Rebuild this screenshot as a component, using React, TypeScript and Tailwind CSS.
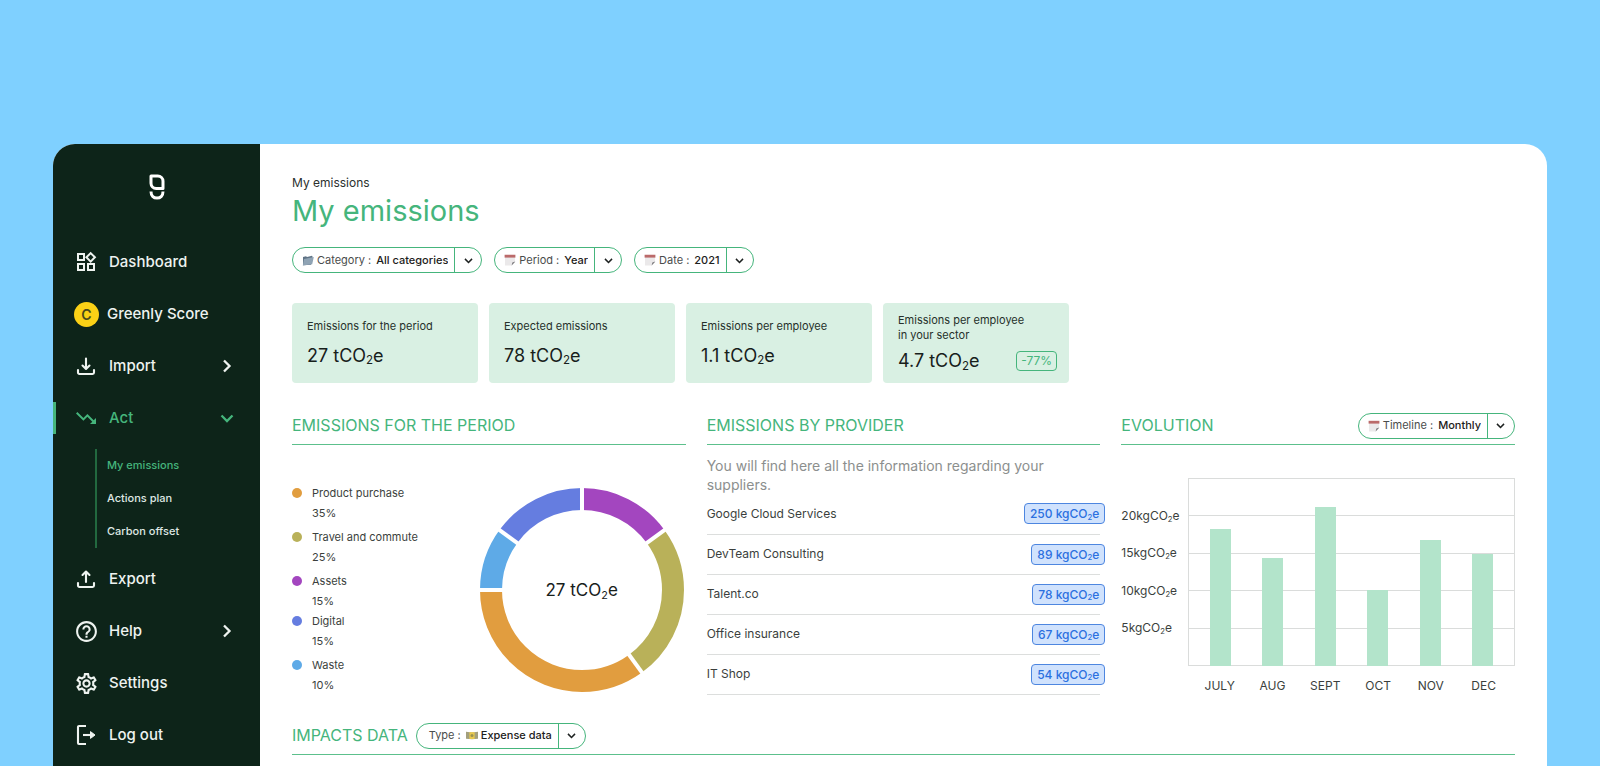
import type { ReactNode } from 'react';
import { MdHelpOutline, MdOutlineSettings, MdOutlineWidgets, MdTrendingDown } from 'react-icons/md';

interface Slice { name: string; pct: number; color: string }
interface Provider { name: string; kg: number }

const LEGEND: Slice[] = [
  { name: 'Product purchase', pct: 35, color: '#e19d3f' },
  { name: 'Travel and commute', pct: 25, color: '#b9b159' },
  { name: 'Assets', pct: 15, color: '#a346bf' },
  { name: 'Digital', pct: 15, color: '#657de0' },
  { name: 'Waste', pct: 10, color: '#5eaae7' },
];

// clockwise from 12 o'clock
const RING = [LEGEND[2], LEGEND[1], LEGEND[0], LEGEND[4], LEGEND[3]];

const PROVIDERS: Provider[] = [
  { name: 'Google Cloud Services', kg: 250 },
  { name: 'DevTeam Consulting', kg: 89 },
  { name: 'Talent.co', kg: 78 },
  { name: 'Office insurance', kg: 67 },
  { name: 'IT Shop', kg: 54 },
];

const MONTHS = [
  { name: 'JULY', value: 18.3 },
  { name: 'AUG', value: 14.4 },
  { name: 'SEPT', value: 21.2 },
  { name: 'OCT', value: 10.2 },
  { name: 'NOV', value: 16.9 },
  { name: 'DEC', value: 15 },
];
const CHART_MAX = 25;

function CO2() {
  return <>CO<sub className="text-[64%]">2</sub>e</>;
}

function Logo() {
  return (
    <svg width="16" height="26" viewBox="0 0 16 26" fill="none" stroke="#fff" strokeWidth="3" aria-label="Greenly">
      <path d="M2 2h6.8A5.2 5.2 0 0 1 14 7.2v7.3H7.2A5.2 5.2 0 0 1 2 9.3z" strokeLinejoin="round" />
      <path d="M2 17.6c0 4 2.5 6.5 6 6.5s6-2.5 6-6.5" />
    </svg>
  );
}

function TrayIcon({ up }: { up?: boolean }) {
  return (
    <svg width="22" height="22" viewBox="0 0 22 22" fill="none" stroke="currentColor" strokeWidth="2.1" strokeLinecap="round" strokeLinejoin="round">
      <path d="M3 15v2.600A1.400 1.400 0 0 0 4.400 19h13.200a1.400 1.400 0 0 0 1.400-1.400V15" />
      <path d={up ? 'M11 14V4M7.5 7L11 3.5 14.5 7' : 'M11 3.5v10M7.5 10.500L11 14l3.500-3.500'} />
    </svg>
  );
}

function LogoutIcon() {
  return (
    <svg width="22" height="22" viewBox="0 0 22 22" fill="none" stroke="currentColor" strokeWidth="2.1">
      <path d="M11 2H4a1 1 0 0 0-1 1v16a1 1 0 0 0 1 1h7" />
      <path d="M8 11h8" />
      <path d="M15.5 7.6L20 11l-4.5 3.400z" fill="currentColor" strokeWidth="1" strokeLinejoin="round" />
    </svg>
  );
}

function Chevron({ dir, size = 14 }: { dir: 'right' | 'down'; size?: number }) {
  return (
    <svg width={size} height={size} viewBox="0 0 14 14" fill="none" stroke="currentColor" strokeWidth="2.3">
      <path d={dir === 'right' ? 'M4 1.5L9.5 7 4 12.5' : 'M1.5 4.5L7 10l5.5-5.5'} />
    </svg>
  );
}

function FolderIcon() {
  return (
    <svg width="12" height="11" viewBox="0 0 12 11">
      <path d="M1 2l3-.8 1 .8 5-1.2.6 1L9 9.8l-8 .4z" fill="#5f7385" />
      <path d="M2 4l9.8-2-1.6 7.2-9.4 1.2z" fill="#8fa3b4" />
    </svg>
  );
}

function CalendarIcon() {
  return (
    <svg width="12" height="12" viewBox="0 0 12 12">
      <path d="M1 3h10v5l-3 3.4H1z" fill="#ebe9ea" />
      <path d="M.6.8h10.8v2.8H.6z" fill="#bb6a6a" />
      <path d="M7.6 11.4l.8-3 3-.8z" fill="#77767a" />
    </svg>
  );
}

function MoneyIcon() {
  return (
    <svg width="12" height="9" viewBox="0 0 12 9">
      <path d="M0 .8l6 .6 6-.6v7l-6 .4-6-.4z" fill="#a3a07c" />
      <path d="M3.4 1.2h5.2V8H3.4z" fill="#e8c84e" />
      <circle cx="6" cy="4.5" r="1.5" fill="#9a9350" />
    </svg>
  );
}

function Filter({ label, value, icon, valueIcon }: { label: string; value: string; icon?: ReactNode; valueIcon?: ReactNode }) {
  return (
    <label className="relative flex h-[26px] items-center rounded-full border border-[#45b57c] bg-white pl-[9px] text-[11px] text-[#4a4d4c]">
      {icon}
      <span className="ml-[3px] mr-[5px]">{label} :</span>
      {valueIcon && <span className="mr-[3px]">{valueIcon}</span>}
      <select className="h-full appearance-none pr-[33px] font-medium text-[#1d2120] outline-none [field-sizing:content]">
        <option>{value}</option>
      </select>
      <span className="pointer-events-none absolute inset-y-0 right-0 flex w-[27px] items-center justify-center border-l border-[#45b57c] text-[#1d2120]">
        <Chevron dir="down" size={9} />
      </span>
    </label>
  );
}

function NavItem({ icon, label, chevron, active }: { icon: ReactNode; label: string; chevron?: 'right' | 'down'; active?: boolean }) {
  return (
    <a
      href="#"
      className={`relative flex h-[52px] items-center pl-[22px] pr-[26px] text-[15px] font-medium ${active ? 'text-[#45b57c]' : 'text-[#eef3f0]'}`}
    >
      {active && <span className="absolute left-0 h-8 w-[3px] bg-[#45b57c]" />}
      <span className="flex w-[22px] justify-center">{icon}</span>
      <span className="ml-3 flex-1">{label}</span>
      {chevron && <Chevron dir={chevron} />}
    </a>
  );
}

function Sidebar() {
  return (
    <nav className="w-[207px] shrink-0 bg-[#0d2419]">
      <div className="flex h-[92px] justify-center pt-[30px]"><Logo /></div>
      <NavItem icon={<MdOutlineWidgets size={24} className="shrink-0" />} label="Dashboard" />
      <a href="#" className="flex h-[52px] items-center gap-2 pl-[21px] text-[15px] font-medium text-[#eef3f0]">
        <span className="flex size-[25px] items-center justify-center rounded-full bg-[#fbd116] text-[14px] font-semibold text-[#4a4a1c]">C</span>
        Greenly Score
      </a>
      <NavItem icon={<TrayIcon />} label="Import" chevron="right" />
      <NavItem icon={<MdTrendingDown size={24} className="shrink-0" />} label="Act" chevron="down" active />
      <ul className="my-[5px] ml-[42px] border-l-2 border-[#22693f] pl-2.5 text-[11px] font-medium text-[#dfe7e3]">
        <li className="flex h-[33px] items-center text-[#45b57c]"><a href="#">My emissions</a></li>
        <li className="flex h-[33px] items-center"><a href="#">Actions plan</a></li>
        <li className="flex h-[33px] items-center"><a href="#">Carbon offset</a></li>
      </ul>
      <NavItem icon={<TrayIcon up />} label="Export" />
      <NavItem icon={<MdHelpOutline size={25} className="shrink-0" />} label="Help" chevron="right" />
      <NavItem icon={<MdOutlineSettings size={25} className="shrink-0" />} label="Settings" />
      <NavItem icon={<LogoutIcon />} label="Log out" />
    </nav>
  );
}

function StatCard({ label, value, delta }: { label: ReactNode; value: string; delta?: string }) {
  return (
    <div className="flex h-20 w-[186px] flex-col justify-center rounded bg-[#d9f0e3] pl-[15px] pr-3 pt-0.5">
      <div className="text-[11px] leading-[15px] text-[#26302b]">{label}</div>
      <div className={`flex items-center justify-between ${delta ? 'mt-1' : 'mt-2'}`}>
        <span className="text-[18px] leading-7 text-[#17201b]">{value} t<CO2 /></span>
        {delta && (
          <span className="rounded border border-[#45b57c] px-1 text-[12px] leading-[18px] text-[#45b57c]">{delta}</span>
        )}
      </div>
    </div>
  );
}

function SectionHeader({ title, children }: { title: string; children?: ReactNode }) {
  return (
    <div className="flex h-[38px] items-center justify-between border-b border-[#5cc08c]">
      <h2 className="pb-0.5 text-[16px] text-[#45b57c]">{title}</h2>
      {children}
    </div>
  );
}

function Donut() {
  const r = 91;
  const len = 2 * Math.PI * r;
  let start = 0;
  const arcs = RING.map((s) => {
    const arc = { ...s, start };
    start += s.pct;
    return arc;
  });
  return (
    <div className="relative size-[204px]">
      <svg viewBox="-102 -102 204 204" className="size-full -rotate-90">
        {arcs.map((a) => (
          <circle
            key={a.name}
            r={r}
            fill="none"
            stroke={a.color}
            strokeWidth="22"
            strokeDasharray={`${(a.pct / 100) * len} ${len}`}
            strokeDashoffset={-(a.start / 100) * len}
          />
        ))}
        {arcs.map((a) => (
          <line key={a.name} x1="76" x2="104" stroke="#fff" strokeWidth="4" transform={`rotate(${a.start * 3.6})`} />
        ))}
      </svg>
      <div className="absolute inset-0 flex items-center justify-center text-[17px] text-[#17201b]">
        <span>27 t<CO2 /></span>
      </div>
    </div>
  );
}

function PeriodSection() {
  return (
    <section>
      <SectionHeader title="EMISSIONS FOR THE PERIOD" />
      <div className="flex justify-between pr-0.5 pt-[38px] text-[11px] leading-5 text-[#3b3f3d]">
        <ul>
          {LEGEND.map((s) => (
            <li key={s.name} className={s.name === 'Assets' ? 'flex gap-2.5' : 'mb-1 flex gap-2.5'}>
              <span className="mt-[5px] size-2.5 rounded-full" style={{ background: s.color }} />
              <div>
                <div>{s.name}</div>
                <div>{s.pct}%</div>
              </div>
            </li>
          ))}
        </ul>
        <div className="mt-[5px]"><Donut /></div>
      </div>
    </section>
  );
}

function ProviderSection() {
  return (
    <section>
      <SectionHeader title="EMISSIONS BY PROVIDER" />
      <p className="pt-[11px] text-[14px] leading-[19px] text-[#8c8f8e]">
        You will find here all the information regarding your suppliers.
      </p>
      <table className="w-full text-[12px] text-[#3b3f3d]">
        <tbody>
          {PROVIDERS.map((p) => (
            <tr key={p.name} className="h-10 border-b border-[#dcdedd]">
              <td>{p.name}</td>
              <td>
                <div className="-mr-[5px] flex justify-end">
                  <span className="rounded border border-[#4d86e0] bg-[#d0e2fd] px-[5px] font-medium leading-[19px] text-[#2c70e0]">
                    {p.kg} kg<CO2 />
                  </span>
                </div>
              </td>
            </tr>
          ))}
        </tbody>
      </table>
    </section>
  );
}

function EvolutionSection() {
  return (
    <section>
      <SectionHeader title="EVOLUTION">
        <Filter icon={<CalendarIcon />} label="Timeline" value="Monthly" />
      </SectionHeader>
      <div className="flex pt-[33px] text-[12px] text-[#3b3f3d]">
        <div className="flex h-[188px] w-[67px] flex-col py-[19px]">
          {[20, 15, 10, 5].map((v) => (
            <div key={v} className="flex flex-1 items-center"><span>{v}kg<CO2 /></span></div>
          ))}
        </div>
        <div className="flex-1">
          <div className="relative flex h-[188px] flex-col border-x border-t border-[#dadcdb]">
            {[0, 1, 2, 3, 4].map((i) => (
              <div key={i} className="flex-1 border-b border-[#dadcdb]" />
            ))}
            <div className="absolute inset-0 flex items-end px-[5px]">
              {MONTHS.map((m) => (
                <div key={m.name} className="flex h-full flex-1 items-end justify-center">
                  <div className="w-[21px] bg-[#b3e4cb]" style={{ height: `${(m.value / CHART_MAX) * 100}%` }} />
                </div>
              ))}
            </div>
          </div>
          <div className="mt-2.5 flex px-[5px] leading-5">
            {MONTHS.map((m) => (
              <div key={m.name} className="flex-1 text-center">{m.name}</div>
            ))}
          </div>
        </div>
      </div>
    </section>
  );
}

export default function App() {
  return (
    <div className="flex min-h-screen flex-col bg-[#7fd0ff] px-[53px] pt-36 font-['Inter',sans-serif]">
      <div className="flex flex-1 overflow-hidden rounded-t-[22px] bg-white">
        <Sidebar />
        <main className="min-w-0 flex-1 px-8 pt-[29px]">
          <div className="text-[12px] leading-5 text-[#2b302e]">My emissions</div>
          <h1 className="text-[29px] leading-9 text-[#45b57c]">My emissions</h1>
          <div className="mt-[18px] flex gap-3">
            <Filter icon={<FolderIcon />} label="Category" value="All categories" />
            <Filter icon={<CalendarIcon />} label="Period" value="Year" />
            <Filter icon={<CalendarIcon />} label="Date" value="2021" />
          </div>
          <div className="mt-[30px] flex gap-[11px]">
            <StatCard label="Emissions for the period" value="27" />
            <StatCard label="Expected emissions" value="78" />
            <StatCard label="Emissions per employee" value="1.1" />
            <StatCard label={<>Emissions per employee<br />in your sector</>} value="4.7" delta="-77%" />
          </div>
          <div className="mt-6 grid grid-cols-3 gap-[21px]">
            <PeriodSection />
            <ProviderSection />
            <EvolutionSection />
          </div>
          <div className="mt-[18px] flex h-[38px] items-center gap-2 border-b border-[#5cc08c]">
            <h2 className="pb-0.5 text-[16px] text-[#45b57c]">IMPACTS DATA</h2>
            <Filter label="Type" value="Expense data" valueIcon={<MoneyIcon />} />
          </div>
        </main>
      </div>
    </div>
  );
}
